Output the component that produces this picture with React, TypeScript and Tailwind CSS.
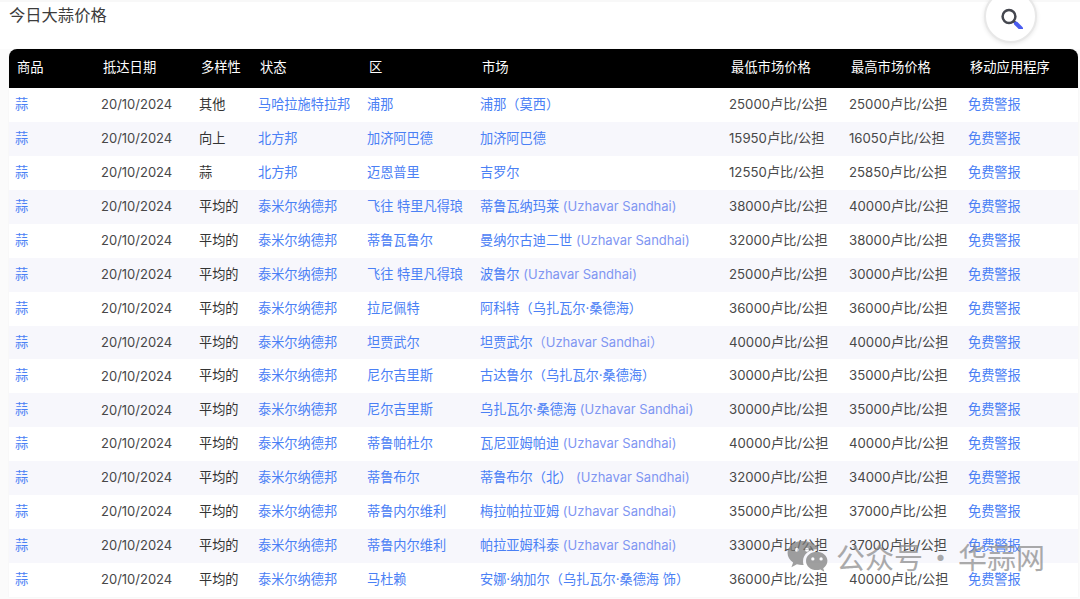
import React from 'react';

const head = ['商品', '抵达日期', '多样性', '状态', '区', '市场', '最低市场价格', '最高市场价格', '移动应用程序'];

const rows = [
  ['其他', '马哈拉施特拉邦', '浦那', '浦那（莫西）', '25000', '25000'],
  ['向上', '北方邦', '加济阿巴德', '加济阿巴德', '15950', '16050'],
  ['蒜', '北方邦', '迈恩普里', '吉罗尔', '12550', '25850'],
  ['平均的', '泰米尔纳德邦', '飞往 特里凡得琅', '蒂鲁瓦纳玛莱 (Uzhavar Sandhai)', '38000', '40000'],
  ['平均的', '泰米尔纳德邦', '蒂鲁瓦鲁尔', '曼纳尔古迪二世 (Uzhavar Sandhai)', '32000', '38000'],
  ['平均的', '泰米尔纳德邦', '飞往 特里凡得琅', '波鲁尔 (Uzhavar Sandhai)', '25000', '30000'],
  ['平均的', '泰米尔纳德邦', '拉尼佩特', '阿科特（乌扎瓦尔·桑德海）', '36000', '36000'],
  ['平均的', '泰米尔纳德邦', '坦贾武尔', '坦贾武尔（Uzhavar Sandhai）', '40000', '40000'],
  ['平均的', '泰米尔纳德邦', '尼尔吉里斯', '古达鲁尔（乌扎瓦尔·桑德海）', '30000', '35000'],
  ['平均的', '泰米尔纳德邦', '尼尔吉里斯', '乌扎瓦尔·桑德海 (Uzhavar Sandhai)', '30000', '35000'],
  ['平均的', '泰米尔纳德邦', '蒂鲁帕杜尔', '瓦尼亚姆帕迪 (Uzhavar Sandhai)', '40000', '40000'],
  ['平均的', '泰米尔纳德邦', '蒂鲁布尔', '蒂鲁布尔（北） (Uzhavar Sandhai)', '32000', '34000'],
  ['平均的', '泰米尔纳德邦', '蒂鲁内尔维利', '梅拉帕拉亚姆 (Uzhavar Sandhai)', '35000', '37000'],
  ['平均的', '泰米尔纳德邦', '蒂鲁内尔维利', '帕拉亚姆科泰 (Uzhavar Sandhai)', '33000', '37000'],
  ['平均的', '泰米尔纳德邦', '马杜赖', '安娜·纳加尔（乌扎瓦尔·桑德海 饰）', '36000', '40000'],
];

const widths = ['w-[86px]', 'w-[98px]', 'w-[59px]', 'w-[109px]', 'w-[113px]', 'w-[249px]', 'w-[120px]', 'w-[119px]', 'w-[116px]'];

// the latin market name is a lighter blue than the chinese part
function Market({ name }: { name: string }) {
  const parts = name.split(/([（(]?Uzhavar Sandhai[）)]?)/);
  return (
    <>
      {parts.map((p, i) =>
        i % 2 === 1 ? (
          <span key={i} className="text-[#7f96f2] text-[13px]">{p}</span>
        ) : (
          <span key={i}>{p}</span>
        ),
      )}
    </>
  );
}

function SearchButton() {
  return (
    <div className="absolute left-[984px] top-[-10px] w-[53px] h-[53px] rounded-full bg-white border-2 border-[#e8e8e8] shadow-[0_1px_4px_rgba(0,0,0,0.1)] flex items-center justify-center">
      <svg width="24" height="24" viewBox="0 0 24 24" fill="none">
        <circle cx="10" cy="11.500" r="6.400" stroke="#45474f" strokeWidth="2.500" />
        <path d="M14.500 16 L17 18.500" stroke="#45474f" strokeWidth="2.600" />
        <path d="M17 18.500 L22 23.500" stroke="#4a5cf0" strokeWidth="4" strokeLinecap="round" />
      </svg>
    </div>
  );
}

function Watermark() {
  return (
    <div className="absolute left-[786px] top-[539px] flex items-center pointer-events-none text-[#888] opacity-70">
      <svg width="42" height="35" viewBox="0 0 42 36" fill="#777" className="mr-[8px]">
        <path d="M16 2C7.700 2 1 7.600 1 14.500c0 4 2.200 7.400 5.700 9.700L5 29l5.600-3c1.700.5 3.500.8 5.400.8.500 0 1 0 1.500-.1-.4-1.200-.6-2.500-.6-3.800 0-6.900 6.300-12.400 14-12.400.5 0 1 0 1.400.1C31 5.400 24.200 2 16 2z" />
        <path d="M31 13c-6.100 0-11 4.200-11 9.500S24.900 32 31 32c1.300 0 2.600-.2 3.800-.6l4 2.200-1.100-3.500c2.600-1.800 4.300-4.500 4.300-7.600C42 17.200 37.100 13 31 13z" />
        <circle cx="10.500" cy="11" r="2" fill="#fff" />
        <circle cx="21" cy="11" r="2" fill="#fff" />
        <circle cx="27" cy="20.500" r="1.700" fill="#fff" />
        <circle cx="35.500" cy="20.500" r="1.700" fill="#fff" />
      </svg>
      <div className="flex items-center text-[29px] leading-none whitespace-nowrap font-['Noto_Sans_CJK_SC',sans-serif]">
        <span>公众号</span>
        <span className="w-[35px] text-center">·</span>
        <span>华蒜网</span>
      </div>
    </div>
  );
}

export default function App() {
  return (
    <div className="relative w-[1080px] h-[599px] overflow-hidden flex flex-col bg-white font-['Inter','Noto_Sans_CJK_SC',sans-serif] text-[13.2px] text-[#484848]">
      <div className="h-[2px] bg-[#f8f8f8]" />
      <div className="pl-[9px] pt-[3px] h-[47px] text-[16.3px] leading-[20px] text-[#3c3c3c]">今日大蒜价格</div>
      <SearchButton />
      <div className="flex-1 bg-[#fbfbfb] pl-[9px]">
        <div className="w-[1069px] shadow-[0_0_2px_rgba(0,0,0,0.06)] rounded-t-[8px]">
          <table className="w-full table-fixed border-collapse">
            <thead>
              <tr className="h-[39.3px] bg-black text-white text-[13.3px]">
                {head.map((h, i) => (
                  <th
                    key={h}
                    className={`${widths[i]} pl-[8px] pb-[1px] text-left font-normal ${i === 0 ? 'rounded-tl-[8px]' : ''} ${i === 8 ? 'rounded-tr-[8px]' : ''}`}
                  >
                    {h}
                  </th>
                ))}
              </tr>
            </thead>
            <tbody>
              {rows.map((r, idx) => (
                <tr key={idx} className="h-[33.9px] even:bg-[#f7f7fc] odd:bg-white">
                  <td className="pl-[6px] text-[#4a80f5]">蒜</td>
                  <td className="pl-[6px] whitespace-nowrap text-[13px]">20/10/2024</td>
                  <td className="pl-[6px] text-[#333]">{r[0]}</td>
                  <td className="pl-[6px] text-[#4a80f5] whitespace-nowrap">{r[1]}</td>
                  <td className="pl-[6px] text-[#4a80f5] whitespace-nowrap">{r[2]}</td>
                  <td className="pl-[6px] text-[#4a80f5] whitespace-nowrap"><Market name={r[3]} /></td>
                  <td className="pl-[6px] whitespace-nowrap">{r[4]}卢比/公担</td>
                  <td className="pl-[6px] whitespace-nowrap">{r[5]}卢比/公担</td>
                  <td className="pl-[6px] text-[#4a80f5]">免费警报</td>
                </tr>
              ))}
            </tbody>
          </table>
        </div>
      </div>
      <Watermark />
    </div>
  );
}
